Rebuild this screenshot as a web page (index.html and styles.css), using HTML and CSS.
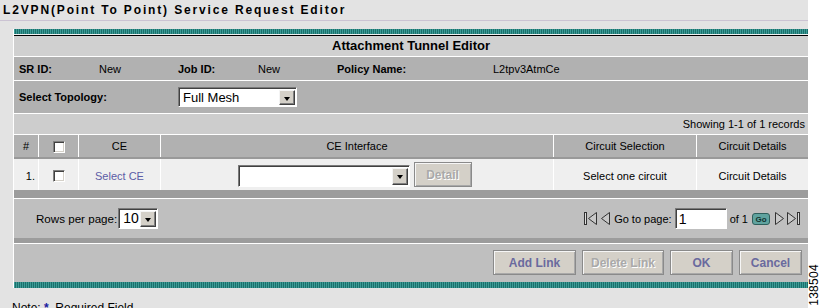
FILE: index.html
```html
<!DOCTYPE html>
<html>
<head>
<meta charset="utf-8">
<link rel="stylesheet" href="styles.css">
</head>
<body>

<div class="page">
  <h1 class="title">L2VPN(Point To Point) Service Request Editor</h1>

  <div class="panel">
    <div class="stripe stripe-top"></div>
    <div class="caption">Attachment Tunnel Editor</div>

    <div class="info">
      <span class="lbl">SR ID:</span><span>New</span>
      <span class="lbl">Job ID:</span><span>New</span>
      <span class="lbl">Policy Name:</span><span>L2tpv3AtmCe</span>
    </div>

    <div class="topo">
      <span class="lbl topo-lbl">Select Topology:</span>
      <span class="combo combo-topo"><span class="combo-text">Full Mesh</span><span class="combo-btn"></span></span>
    </div>

    <div class="showing">Showing 1-1 of 1 records</div>

    <table class="grid">
      <tr class="head">
        <th class="c-num">#</th>
        <th class="c-chk"><span class="chk"></span></th>
        <th class="c-ce">CE</th>
        <th class="c-if">CE Interface</th>
        <th class="c-sel">Circuit Selection</th>
        <th class="c-det">Circuit Details</th>
      </tr>
      <tr class="row">
        <td class="num">1.</td>
        <td><span class="chk"></span></td>
        <td><a class="link" href="#">Select CE</a></td>
        <td>
          <div class="if-cell">
            <span class="combo combo-if"><span class="combo-text"></span><span class="combo-btn"></span></span>
            <span class="btn btn-off btn-detail">Detail</span>
          </div>
        </td>
        <td>Select one circuit</td>
        <td>Circuit Details</td>
      </tr>
    </table>

    <div class="sep sep-big"></div>

    <div class="pager">
      <span class="rows-lbl">Rows per page:</span>
      <span class="combo combo-rows"><span class="combo-text">10</span><span class="combo-btn"></span></span>

      <div class="nav">
        <svg width="14" height="13" viewBox="0 0 14 13"><rect x="0.5" y="0.5" width="2" height="12" fill="#ddd" stroke="#333"/><path d="M12.5 0.5 L4.5 6.5 L12.5 12.5 Z" fill="#c8c8c8" stroke="#333"/></svg>
        <svg width="9" height="13" viewBox="0 0 9 13"><path d="M8.5 0.5 L0.5 6.5 L8.5 12.5 Z" fill="#c8c8c8" stroke="#333"/></svg>
        <span class="goto">Go to page:</span>
        <span class="page-input">1</span>
        <span>of 1</span>
        <span class="go">Go</span>
        <svg width="9" height="13" viewBox="0 0 9 13"><path d="M0.5 0.5 L8.5 6.5 L0.5 12.5 Z" fill="#c8c8c8" stroke="#333"/></svg>
        <svg width="14" height="13" viewBox="0 0 14 13"><path d="M0.5 0.5 L8.5 6.5 L0.5 12.5 Z" fill="#c8c8c8" stroke="#333"/><rect x="10.5" y="0.5" width="2" height="12" fill="#ddd" stroke="#333"/></svg>
      </div>
    </div>

    <div class="sep sep-small"></div>

    <div class="actions">
      <span class="btn btn-add">Add Link</span>
      <span class="btn btn-off btn-del">Delete Link</span>
      <span class="btn btn-ok">OK</span>
      <span class="btn btn-cancel">Cancel</span>
    </div>

    <div class="stripe stripe-bottom"></div>
  </div>

  <p class="note">Note: <span class="star">*</span> &nbsp;Required Field</p>
</div>

<div class="fig">138504</div>

</body>
</html>
```

FILE: styles.css
```css
body {
  margin: 0;
  background: #fff;
  font-family: "Liberation Sans", Arial, sans-serif;
  font-size: 11px;
  color: #000;
}

.page {
  width: 808px;
  height: 308px;
  background: #e3e3e3;
  overflow: hidden;
}

/* Page heading */
.title {
  margin: 0;
  height: 21px;
  box-sizing: border-box;
  padding: 3px 0 0 3px;
  font-size: 12px;
  line-height: 14px;
  font-weight: bold;
  letter-spacing: 1.85px;
  border-bottom: 1px solid #cbc3d3;
}

.panel {
  margin: 8px 0 0 13px;
  border-left: 1px solid #fff;
}

/* Teal striped bars top and bottom */
.stripe {
  background: repeating-linear-gradient(90deg, #3d9b96 0 1px, #1b706c 1px 2px);
}

.stripe-top {
  height: 5px;
  border-bottom: 1px solid #f2f2f2;
}

.stripe-bottom {
  height: 6px;
}

.caption {
  height: 20px;
  line-height: 20px;
  border-top: 1px solid #000;
  border-bottom: 1px solid #fff;
  background: #d0d0d0;
  text-align: center;
  font-size: 13px;
  font-weight: bold;
}

.lbl {
  font-weight: bold;
}

.info {
  display: grid;
  grid-template-columns: 80px 79px 80px 79px 156px 1fr;
  align-items: center;
  height: 23px;
  padding-left: 5px;
  background: #b1b1b1;
  border-bottom: 1px solid #fff;
}

.topo {
  display: flex;
  align-items: center;
  height: 32px;
  padding-left: 5px;
  background: #b1b1b1;
  border-bottom: 1px solid #fff;
}

.topo-lbl {
  width: 159px;
}

.showing {
  height: 20px;
  line-height: 20px;
  padding-right: 3px;
  text-align: right;
  background: #cdcdcd;
  border-bottom: 1px solid #fff;
}

/* Attachment table */
.grid {
  width: 100%;
  border-collapse: collapse;
}

.grid th,
.grid td {
  padding: 0;
  border-left: 1px solid #fff;
  text-align: center;
  font-weight: normal;
}

.grid th:first-child,
.grid td:first-child {
  border-left: none;
}

.head {
  height: 23px;
  background: #b1b1b1;
  border-bottom: 2px solid #999;
}

.row {
  height: 32px;
  background: #efefef;
}

.row td {
  padding-top: 2px;
}

.c-num { width: 24px; }
.c-chk { width: 39px; }
.c-ce { width: 81px; }
.c-if { width: 392px; }
.c-sel { width: 142px; }

.grid td.num {
  text-align: right;
  padding-right: 3px;
}

.chk {
  display: inline-block;
  vertical-align: middle;
  width: 12px;
  height: 12px;
  box-sizing: border-box;
  background: #fff;
  border: 1px solid;
  border-color: #808080 #fff #fff #808080;
  box-shadow: inset 1px 1px 0 #404040, inset -1px -1px 0 #d4d0c8;
}

.link {
  color: #5c5ca6;
  text-decoration: none;
}

.if-cell {
  display: flex;
  justify-content: center;
  align-items: center;
  gap: 4px;
  padding-right: 5px;
}

/* Windows-style dropdowns */
.combo {
  display: inline-flex;
  box-sizing: border-box;
  background: #fff;
  border: 1px solid;
  border-color: #7a7a7a #fff #fff #7a7a7a;
  box-shadow: inset 1px 1px 0 #404040;
  padding: 2px 1px 1px 2px;
}

.combo-text {
  flex: 1;
  font-size: 13px;
  line-height: 15px;
  padding-left: 2px;
}

.combo-btn {
  position: relative;
  width: 16px;
  box-sizing: border-box;
  background: #d4d0c8;
  border: 1px solid;
  border-color: #f4f4f4 #404040 #404040 #f4f4f4;
  box-shadow: inset -1px -1px 0 #808080;
}

.combo-btn::after {
  content: "";
  position: absolute;
  left: 4px;
  top: 6px;
  border-left: 3.5px solid transparent;
  border-right: 3.5px solid transparent;
  border-top: 4px solid #000;
}

.combo-topo {
  width: 119px;
  height: 20px;
}

.combo-if {
  width: 172px;
  height: 22px;
}

.combo-rows {
  width: 40px;
  height: 21px;
  margin-left: 1px;
}

.combo-rows .combo-text {
  font-size: 14px;
}

/* Buttons */
.btn {
  display: inline-flex;
  align-items: center;
  justify-content: center;
  box-sizing: border-box;
  height: 25px;
  background: #d4d0c8;
  border: 1px solid #8a8a8a;
  box-shadow: inset 1px 1px 0 #f6f6f6, inset -1px -1px 0 #a9a9a9;
  font-size: 12px;
  font-weight: bold;
  color: #6a6a9e;
}

.btn-off {
  color: #a9a9a9;
  text-shadow: 1px 1px 0 #fff;
}

.btn-detail {
  width: 58px;
  margin-top: -2px;
}

.sep {
  background: #9c9c9c;
  border-bottom: 1px solid #fff;
}

.sep-big { height: 8px; }
.sep-small { height: 5px; }

.pager {
  display: flex;
  align-items: center;
  height: 39px;
  padding: 0 7px 0 22px;
  background: #bfbfbf;
  font-size: 11px;
}

.rows-lbl {
  font-size: 11.6px;
}

.nav {
  display: flex;
  align-items: center;
  margin-left: auto;
  gap: 3px;
}

.goto {
  margin-left: 1px;
}

.page-input {
  width: 52px;
  height: 21px;
  box-sizing: border-box;
  background: #fff;
  border: 1px solid;
  border-color: #7a7a7a #fff #fff #7a7a7a;
  box-shadow: inset 1px 1px 0 #404040;
  padding: 2px 0 0 3px;
  font-size: 14px;
  line-height: 16px;
}

.go {
  width: 18px;
  height: 12px;
  line-height: 12px;
  box-sizing: border-box;
  border: 1px solid #2f5f5c;
  border-radius: 3px;
  background: #5fa39f;
  color: #13332f;
  font-size: 8px;
  font-weight: bold;
  text-align: center;
  margin: 0 2px 0 1px;
}

.actions {
  display: flex;
  justify-content: flex-end;
  gap: 6px;
  height: 38px;
  box-sizing: border-box;
  padding: 6px 6px 0 0;
  background: #bfbfbf;
}

.btn-add { width: 83px; }
.btn-del { width: 82px; }
.btn-ok { width: 63px; }
.btn-cancel { width: 63px; }

.note {
  margin: 13px 0 0 12px;
  font-size: 12px;
}

.star {
  color: #1a1aa0;
  font-weight: bold;
}

/* Figure number down the right edge */
.fig {
  position: absolute;
  left: 808px;
  top: 264px;
  writing-mode: vertical-rl;
  transform: rotate(180deg);
  font-size: 12px;
  line-height: 13px;
  letter-spacing: 0.3px;
}
```
